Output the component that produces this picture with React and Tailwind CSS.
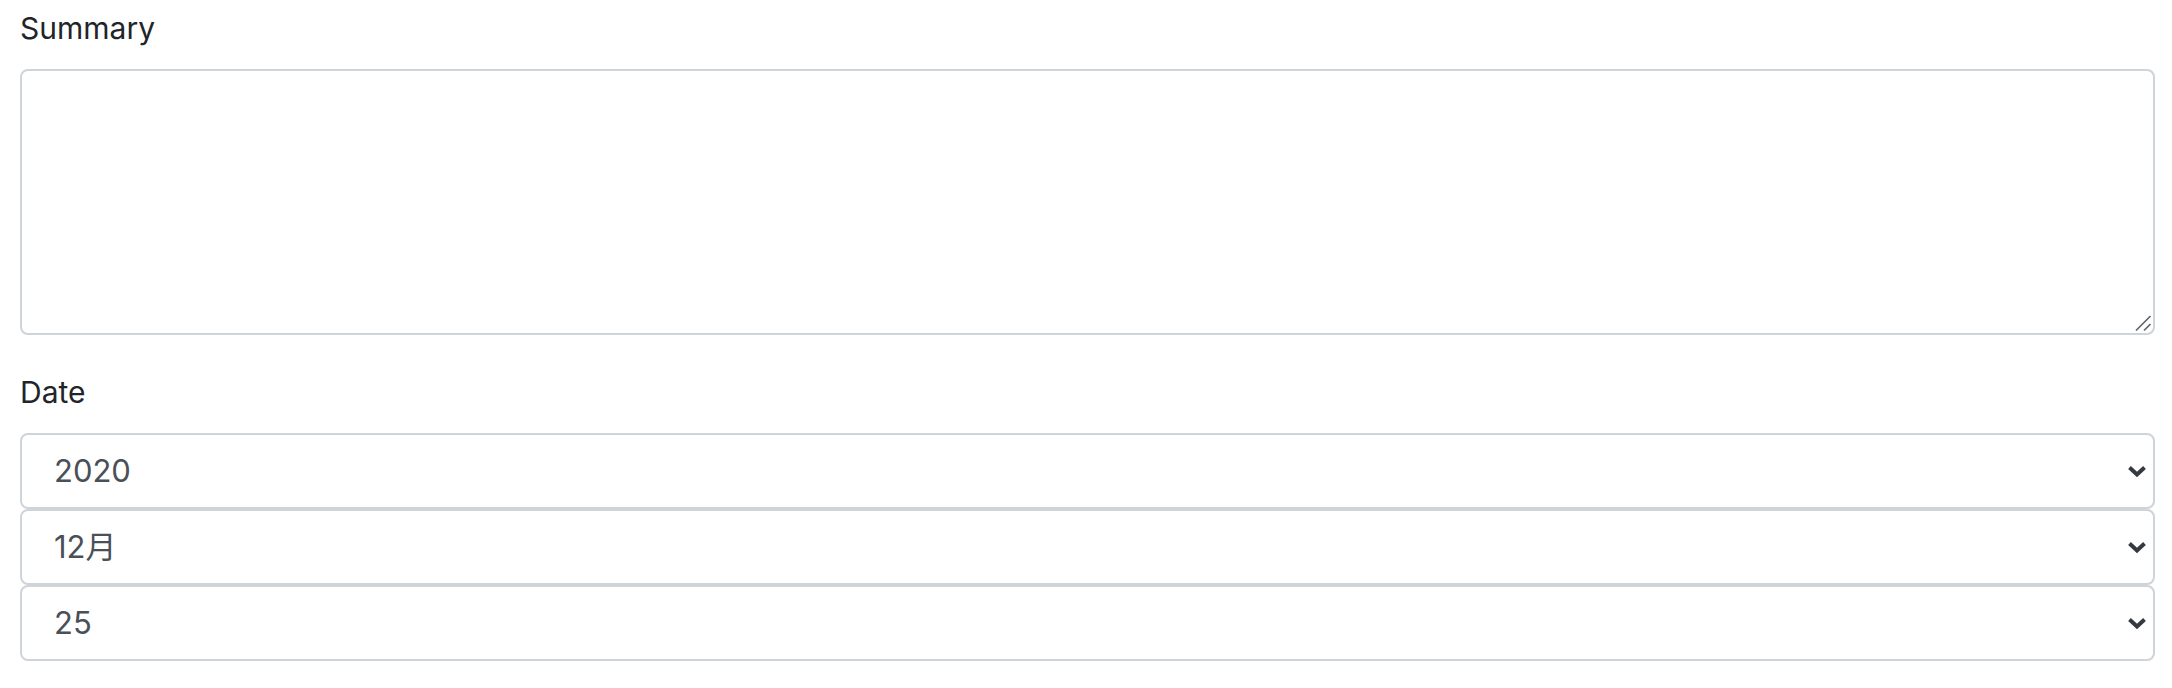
import { useState } from 'react'

const fontStack = { fontFamily: 'Inter, "Noto Sans CJK JP", sans-serif' }

function Chevron() {
  return (
    <svg
      className="pointer-events-none absolute right-[8px] top-1/2 -translate-y-1/2"
      width="20"
      height="12"
      viewBox="0 0 20 12"
      fill="none"
    >
      <path d="M2.5 2.5 L10 9.5 L17.5 2.5" stroke="#343a40" strokeWidth="4" />
    </svg>
  )
}

// textarea grip drawn by hand so it has the reference's size
function ResizeGrip() {
  return (
    <svg className="pointer-events-none absolute bottom-[3px] right-[3px]" width="18" height="18" viewBox="0 0 18 18" fill="none">
      <path d="M2 16.5 L16.5 2" stroke="#5f5f5f" strokeWidth="1.6" />
      <path d="M10 16.5 L16.5 10" stroke="#5f5f5f" strokeWidth="1.6" />
    </svg>
  )
}

function DateSelect({ value, options, onChange }) {
  return (
    <div className="relative">
      <select
        value={value}
        onChange={(e) => onChange(e.target.value)}
        className="block h-[76px] w-full appearance-none rounded-[8px] border-2 border-[#ced4da] bg-white pl-[32px] pr-[60px] text-[31px] text-[#495057] outline-none"
        style={fontStack}
      >
        {options.map((o) => (
          <option key={o.value} value={o.value}>
            {o.label}
          </option>
        ))}
      </select>
      <Chevron />
    </div>
  )
}

export default function App() {
  const [year, setYear] = useState('2020')
  const [month, setMonth] = useState('12')
  const [day, setDay] = useState('25')

  const years = ['2018', '2019', '2020', '2021'].map((y) => ({ value: y, label: y }))
  const months = Array.from({ length: 12 }, (_, i) => ({ value: String(i + 1), label: `${i + 1}月` }))
  const days = Array.from({ length: 31 }, (_, i) => ({ value: String(i + 1), label: String(i + 1) }))

  return (
    <div className="min-h-screen bg-white pl-[20px] pr-[17px]" style={fontStack}>
      <label className="mt-[11px] mb-[24px] block text-[30px] leading-[34px] text-[#212529]">Summary</label>
      <div className="relative">
        <textarea className="block h-[266px] w-full resize-none rounded-[8px] border-2 border-[#ced4da] bg-white outline-none" />
        <ResizeGrip />
      </div>

      <label className="mt-[40px] mb-[24px] block text-[30px] leading-[34px] text-[#212529]">Date</label>
      <DateSelect value={year} options={years} onChange={setYear} />
      <DateSelect value={month} options={months} onChange={setMonth} />
      <DateSelect value={day} options={days} onChange={setDay} />
    </div>
  )
}
